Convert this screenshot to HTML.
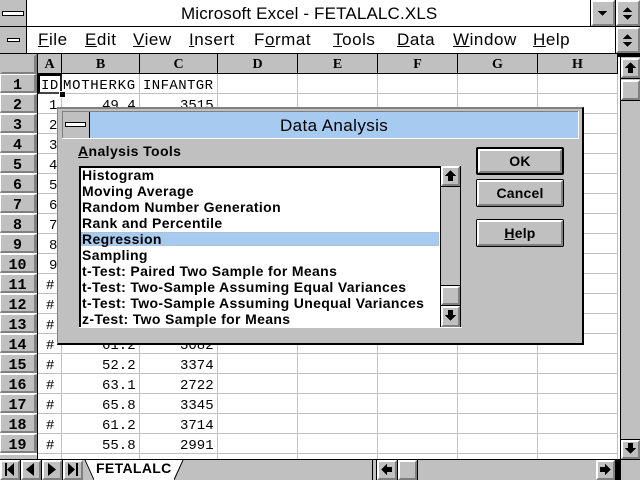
<!DOCTYPE html>
<html><head><meta charset="utf-8">
<style>
html,body{margin:0;padding:0;background:#fff}
#r{position:relative;width:640px;height:480px;overflow:hidden;background:#fff;font-family:"Liberation Sans",sans-serif;color:#000}
#r div,#r svg{position:absolute}
.t{white-space:nowrap;line-height:16px}
.k{background:#000}
.g{background:#c0c0c0}
.btn{background:#c0c0c0;box-sizing:border-box;border-top:2px solid #fff;border-left:2px solid #fff;border-right:2px solid #808080;border-bottom:2px solid #808080}
.m{font-size:17px;top:32px;letter-spacing:.55px}
.ch{top:54px;height:19px;background:#c0c0c0;font:bold 14px/22px "Liberation Serif",serif;text-align:center;border-right:1px solid #000;box-sizing:content-box}
.rh{left:0;width:33px;height:16px;background:#c0c0c0;border-top:1px solid #fff;border-left:1px solid #fff;border-right:3px solid #808080;border-bottom:2px solid #808080;font:bold 15px/22px "Liberation Mono",monospace;text-align:center}
.c{font:14px/24px "Liberation Mono",monospace;white-space:nowrap}
.li{left:82px;font:bold 14px/16px "Liberation Sans",sans-serif;letter-spacing:.35px;white-space:nowrap}
.bt{font:bold 14px/18px "Liberation Sans",sans-serif;text-align:center;letter-spacing:.2px}
</style></head><body><div id="r">

<!-- grid -->
<div style="left:38px;top:74px;width:579px;height:385px;background-image:repeating-linear-gradient(to bottom,transparent 0,transparent 19px,#c0c0c0 19px,#c0c0c0 20px)"></div>
<div style="left:61px;top:74px;width:1px;height:385px;background:#c0c0c0"></div>
<div style="left:139px;top:74px;width:1px;height:385px;background:#c0c0c0"></div>
<div style="left:217px;top:74px;width:1px;height:385px;background:#c0c0c0"></div>
<div style="left:297px;top:74px;width:1px;height:385px;background:#c0c0c0"></div>
<div style="left:377px;top:74px;width:1px;height:385px;background:#c0c0c0"></div>
<div style="left:457px;top:74px;width:1px;height:385px;background:#c0c0c0"></div>
<div style="left:537px;top:74px;width:1px;height:385px;background:#c0c0c0"></div>
<div style="left:617px;top:54px;width:1px;height:405px;background:#c0c0c0"></div>

<!-- title bar -->
<div class="g" style="left:0;top:0;width:26px;height:26px"></div>
<div class="k" style="left:26px;top:0;width:1px;height:27px"></div>
<div style="left:2px;top:11px;width:20px;height:3px;background:#fff;border:1px solid #000"></div>
<div class="t" style="left:181px;top:6px;font-size:17px;letter-spacing:.15px">Microsoft Excel - FETALALC.XLS</div>
<div class="k" style="left:0;top:26px;width:640px;height:1px"></div>
<div class="k" style="left:590px;top:0;width:1px;height:27px"></div>
<div class="btn" style="left:591px;top:0;width:24px;height:26px"></div>
<div class="k" style="left:615px;top:0;width:1px;height:54px"></div>
<div class="btn" style="left:616px;top:0;width:24px;height:26px"></div>
<svg style="left:591px;top:0" width="49" height="26" shape-rendering="crispEdges"><polygon points="7,11 16,11 11.5,16"/><polygon points="32,12 41,12 36.5,7"/><polygon points="32,15 41,15 36.5,20"/></svg>

<!-- menu -->
<div class="g" style="left:0;top:27px;width:26px;height:26px"></div>
<div class="k" style="left:26px;top:27px;width:1px;height:27px"></div>
<div style="left:7px;top:38px;width:11px;height:2px;background:#fff;border:1px solid #000"></div>
<div class="k" style="left:0;top:53px;width:640px;height:1px"></div>
<div class="t m" style="left:38px"><u>F</u>ile</div>
<div class="t m" style="left:85px"><u>E</u>dit</div>
<div class="t m" style="left:133px"><u>V</u>iew</div>
<div class="t m" style="left:189px"><u>I</u>nsert</div>
<div class="t m" style="left:254px">F<u>o</u>rmat</div>
<div class="t m" style="left:333px"><u>T</u>ools</div>
<div class="t m" style="left:397px"><u>D</u>ata</div>
<div class="t m" style="left:453px"><u>W</u>indow</div>
<div class="t m" style="left:533px"><u>H</u>elp</div>
<div class="btn" style="left:616px;top:27px;width:24px;height:26px"></div>
<svg style="left:616px;top:27px" width="24" height="26" shape-rendering="crispEdges"><polygon points="7,12 16,12 11.5,7"/><polygon points="7,15 16,15 11.5,20"/></svg>

<!-- column headers -->
<div class="btn" style="left:0;top:54px;width:37px;height:20px;border-top-color:#c0c0c0;border-left-color:#c0c0c0;border-right-width:3px"></div>
<div class="k" style="left:37px;top:54px;width:1px;height:405px"></div>
<div class="ch" style="left:38px;width:23px">A</div>
<div class="ch" style="left:62px;width:77px">B</div>
<div class="ch" style="left:140px;width:77px">C</div>
<div class="ch" style="left:218px;width:79px">D</div>
<div class="ch" style="left:298px;width:79px">E</div>
<div class="ch" style="left:378px;width:79px">F</div>
<div class="ch" style="left:458px;width:79px">G</div>
<div class="ch" style="left:538px;width:79px">H</div>
<div class="k" style="left:38px;top:73px;width:580px;height:1px"></div>

<!-- row headers -->
<div class="rh" style="top:74px">1</div>
<div class="rh" style="top:94px">2</div>
<div class="rh" style="top:114px">3</div>
<div class="rh" style="top:134px">4</div>
<div class="rh" style="top:154px">5</div>
<div class="rh" style="top:174px">6</div>
<div class="rh" style="top:194px">7</div>
<div class="rh" style="top:214px">8</div>
<div class="rh" style="top:234px">9</div>
<div class="rh" style="top:254px">10</div>
<div class="rh" style="top:274px">11</div>
<div class="rh" style="top:294px">12</div>
<div class="rh" style="top:314px">13</div>
<div class="rh" style="top:334px">14</div>
<div class="rh" style="top:354px">15</div>
<div class="rh" style="top:374px">16</div>
<div class="rh" style="top:394px">17</div>
<div class="rh" style="top:414px">18</div>
<div class="rh" style="top:434px">19</div>
<div class="g" style="left:0;top:454px;width:37px;height:5px;border-top:1px solid #fff;box-sizing:border-box"></div>

<!-- cells -->
<div class="c" style="left:41px;top:74px;letter-spacing:.5px">ID</div>
<div class="c" style="left:63px;top:74px;letter-spacing:.7px">MOTHERKG</div>
<div class="c" style="left:143px;top:74px;letter-spacing:.4px">INFANTGR</div>
<div class="k" style="left:38px;top:74px;width:24px;height:20px;box-sizing:border-box;background:none;border:2px solid #000;border-bottom-color:#444;border-right-color:#222"></div>
<div class="k" style="left:59px;top:91px;width:5px;height:5px;border:1px solid #fff"></div>
<div class="c" style="left:49px;top:94px">1</div>
<div class="c" style="left:49px;top:114px">2</div>
<div class="c" style="left:49px;top:134px">3</div>
<div class="c" style="left:49px;top:154px">4</div>
<div class="c" style="left:49px;top:174px">5</div>
<div class="c" style="left:49px;top:194px">6</div>
<div class="c" style="left:49px;top:214px">7</div>
<div class="c" style="left:49px;top:234px">8</div>
<div class="c" style="left:49px;top:254px">9</div>
<div class="c" style="left:46px;top:274px">#</div>
<div class="c" style="left:46px;top:294px">#</div>
<div class="c" style="left:46px;top:314px">#</div>
<div class="c" style="left:46px;top:334px">#</div>
<div class="c" style="left:46px;top:354px">#</div>
<div class="c" style="left:46px;top:374px">#</div>
<div class="c" style="left:46px;top:394px">#</div>
<div class="c" style="left:46px;top:414px">#</div>
<div class="c" style="left:46px;top:434px">#</div>
<div class="c" style="left:102px;top:94px">49.4</div><div class="c" style="left:180px;top:94px">3515</div>
<div class="c" style="left:102px;top:334px">61.2</div><div class="c" style="left:180px;top:334px">3082</div>
<div class="c" style="left:102px;top:354px">52.2</div><div class="c" style="left:180px;top:354px">3374</div>
<div class="c" style="left:102px;top:374px">63.1</div><div class="c" style="left:180px;top:374px">2722</div>
<div class="c" style="left:102px;top:394px">65.8</div><div class="c" style="left:180px;top:394px">3345</div>
<div class="c" style="left:102px;top:414px">61.2</div><div class="c" style="left:180px;top:414px">3714</div>
<div class="c" style="left:102px;top:434px">55.8</div><div class="c" style="left:180px;top:434px">2991</div>

<!-- vertical scrollbar -->
<div class="g" style="left:620px;top:54px;width:20px;height:405px;border-left:1px solid #000;box-sizing:border-box"></div>
<div class="k" style="left:617px;top:54px;width:23px;height:3px"></div>
<div class="btn" style="left:621px;top:58px;width:19px;height:20px"></div>
<svg style="left:621px;top:58px" width="19" height="20" shape-rendering="crispEdges"><polygon points="9.5,4 15,10 12,10 12,15 7,15 7,10 4,10"/></svg>
<div class="k" style="left:621px;top:78px;width:19px;height:1px"></div>
<div class="btn" style="left:621px;top:80px;width:19px;height:20px"></div>
<div class="k" style="left:621px;top:100px;width:19px;height:1px"></div>
<div class="k" style="left:621px;top:439px;width:19px;height:1px"></div>
<div class="btn" style="left:621px;top:440px;width:19px;height:19px"></div>
<svg style="left:621px;top:440px" width="19" height="19" shape-rendering="crispEdges"><polygon points="7,3 12,3 12,8 15,8 9.5,14 4,8 7,8"/></svg>

<!-- bottom strip -->
<div class="k" style="left:0;top:459px;width:640px;height:1px"></div>
<div class="g" style="left:0;top:460px;width:640px;height:20px"></div>
<div class="btn" style="left:0;top:460px;width:20px;height:20px"></div>
<div class="k" style="left:20px;top:460px;width:1px;height:20px"></div>
<div class="btn" style="left:21px;top:460px;width:20px;height:20px"></div>
<div class="k" style="left:41px;top:460px;width:1px;height:20px"></div>
<div class="btn" style="left:42px;top:460px;width:20px;height:20px"></div>
<div class="k" style="left:62px;top:460px;width:1px;height:20px"></div>
<div class="btn" style="left:63px;top:460px;width:20px;height:20px"></div>
<svg style="left:0;top:460px" width="190" height="20">
<rect x="5" y="3" width="2" height="13" shape-rendering="crispEdges"/><polygon points="7,9.5 14,3 14,16"/>
<polygon points="26,9.5 34,3 34,16"/>
<polygon points="48,3 56,9.5 48,16"/>
<polygon points="68,3 75,9.5 68,16"/><rect x="76" y="3" width="2" height="13" shape-rendering="crispEdges"/>
<polygon points="84,0 183,0 173,20 93,20" fill="#fff"/>
<polyline points="85,0 94,20" fill="none" stroke="#000"/>
<polyline points="183,0 174,20" fill="none" stroke="#000"/>
<line x1="94" y1="19.5" x2="174" y2="19.5" stroke="#fff"/>
</svg>
<div class="t" style="left:96px;top:460px;font:bold 14px/17px 'Liberation Sans',sans-serif;letter-spacing:.35px">FETALALC</div>
<div class="k" style="left:372px;top:460px;width:1px;height:20px"></div>
<div class="k" style="left:376px;top:460px;width:1px;height:20px"></div>
<div class="btn" style="left:377px;top:460px;width:20px;height:20px"></div>
<div class="k" style="left:397px;top:460px;width:1px;height:20px"></div>
<div class="btn" style="left:398px;top:460px;width:19px;height:20px"></div>
<div class="k" style="left:417px;top:460px;width:1px;height:20px"></div>
<div class="btn" style="left:596px;top:460px;width:19px;height:20px"></div>
<div class="k" style="left:615px;top:460px;width:6px;height:20px"></div>
<svg style="left:377px;top:460px" width="20" height="20" shape-rendering="crispEdges"><polygon points="4,9.5 10,4 10,7 15,7 15,12 10,12 10,15"/></svg>
<svg style="left:596px;top:460px" width="19" height="20" shape-rendering="crispEdges"><polygon points="15,9.5 9,4 9,7 4,7 4,12 9,12 9,15"/></svg>

<!-- dialog -->
<div class="g" style="left:57px;top:107px;width:527px;height:238px;box-sizing:border-box;border-left:1px solid #808080;border-top:1px solid #808080;border-right:2px solid #000;border-bottom:2px solid #000"></div>
<div style="left:58px;top:108px;width:524px;height:1px;background:#808080"></div>
<div style="left:62px;top:111px;width:516px;height:1px;background:#808080"></div>
<div style="left:62px;top:111px;width:1px;height:27px;background:#808080"></div>
<div style="left:90px;top:112px;width:488px;height:26px;background:#a6caf0"></div>
<div class="k" style="left:89px;top:112px;width:1px;height:26px"></div>
<div style="left:62px;top:138px;width:517px;height:1px;background:#fff"></div>
<div style="left:578px;top:111px;width:1px;height:28px;background:#fff"></div>
<div style="left:65px;top:122px;width:19px;height:3px;background:#fff;border:1px solid #000"></div>
<div class="t" style="left:280px;top:118px;font-size:17px;letter-spacing:.4px">Data Analysis</div>
<div class="t" style="left:78px;top:143px;font:bold 14px/16px 'Liberation Sans',sans-serif;letter-spacing:.4px"><u>A</u>nalysis Tools</div>

<!-- list -->
<div style="left:79px;top:166px;width:362px;height:162px;background:#fff;box-sizing:border-box;border-left:2px solid #000;border-top:2px solid #000;"></div>
<div style="left:79px;top:327px;width:383px;height:1px;background:#fff"></div>
<div style="left:81px;top:232px;width:358px;height:14px;background:#a6caf0;outline:1px dotted #a8bcd0;outline-offset:-1px"></div>
<div class="li" style="top:167px">Histogram</div>
<div class="li" style="top:183px">Moving Average</div>
<div class="li" style="top:199px">Random Number Generation</div>
<div class="li" style="top:215px">Rank and Percentile</div>
<div class="li" style="top:231px">Regression</div>
<div class="li" style="top:247px">Sampling</div>
<div class="li" style="top:263px">t-Test: Paired Two Sample for Means</div>
<div class="li" style="top:279px">t-Test: Two-Sample Assuming Equal Variances</div>
<div class="li" style="top:295px">t-Test: Two-Sample Assuming Unequal Variances</div>
<div class="li" style="top:311px">z-Test: Two Sample for Means</div>

<!-- list scrollbar -->
<div class="g" style="left:440px;top:166px;width:21px;height:161px;box-sizing:border-box;border-left:1px solid #000;border-right:1px solid #000"></div>
<div class="btn" style="left:441px;top:166px;width:19px;height:20px"></div>
<svg style="left:441px;top:166px" width="19" height="20" shape-rendering="crispEdges"><polygon points="9.5,4 15,10 12,10 12,15 7,15 7,10 4,10"/></svg>
<div class="k" style="left:441px;top:186px;width:19px;height:1px"></div>
<div class="k" style="left:441px;top:285px;width:19px;height:1px"></div>
<div class="btn" style="left:441px;top:286px;width:19px;height:19px"></div>
<div class="k" style="left:441px;top:305px;width:19px;height:1px"></div>
<div class="btn" style="left:441px;top:306px;width:19px;height:21px"></div>
<svg style="left:441px;top:306px" width="19" height="21" shape-rendering="crispEdges"><polygon points="7,4 12,4 12,9 15,9 9.5,15 4,9 7,9"/></svg>

<!-- buttons -->
<div class="k" style="left:476px;top:147px;width:88px;height:28px;border-radius:2px"></div>
<div class="btn" style="left:478px;top:149px;width:84px;height:24px"></div>
<div class="bt" style="left:476px;top:152px;width:88px">OK</div>
<div class="k" style="left:476px;top:179px;width:88px;height:28px;border-radius:2px"></div>
<div class="btn" style="left:477px;top:180px;width:86px;height:26px"></div>
<div class="bt" style="left:476px;top:184px;width:88px">Cancel</div>
<div class="k" style="left:476px;top:219px;width:88px;height:28px;border-radius:2px"></div>
<div class="btn" style="left:477px;top:220px;width:86px;height:26px"></div>
<div class="bt" style="left:476px;top:224px;width:88px"><u>H</u>elp</div>
</div></body></html>
